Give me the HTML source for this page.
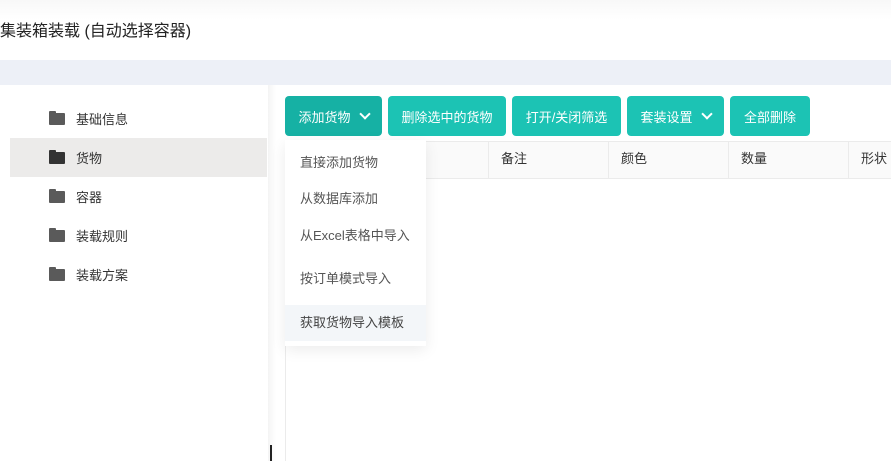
<!DOCTYPE html>
<html><head><meta charset="utf-8"><style>
*{box-sizing:border-box;margin:0;padding:0}
body{width:891px;height:461px;overflow:hidden;background:#fff;font-family:"Liberation Sans","Noto Sans CJK SC",sans-serif;position:relative;color:#333}
.abs{position:absolute}
.hdr{left:0;top:0;width:891px;height:60px;background:linear-gradient(#f8f8f8,#fff 20px)}
.title{left:0;top:17px;font-size:16px;color:#222}
.band{left:0;top:60px;width:891px;height:25px;background:#edf0f7}
.sep{left:268px;top:85px;width:8px;height:376px;background:linear-gradient(to right,#f4f4f4,#fff)}
.item{position:absolute;left:10px;width:257px;height:39px;font-size:13px;color:#333;display:flex;align-items:center;padding-left:66px}
.item .f{position:absolute;left:39px;top:14px;width:16px;height:12px;background:#5a5a5a;border-radius:1px}
.item .f:before{content:"";position:absolute;left:0;top:-2px;width:7px;height:3px;background:#5a5a5a;border-radius:1px 1px 0 0}
.sel{background:#ecebea}
.sel .f,.sel .f:before{background:#333}
.btn{position:absolute;top:96px;height:40px;background:#1cc3b4;color:#fff;font-size:13px;border-radius:4px;display:flex;align-items:center;justify-content:center}
.chev{display:inline-block;width:8px;height:8px;border-right:2px solid #fff;border-bottom:2px solid #fff;transform:rotate(45deg);margin-left:10px;margin-top:-5px}
.th{position:absolute;top:141px;height:38px;border-top:1px solid #ebebeb;border-bottom:1px solid #ebebeb;background:#fafafa}
.col{position:absolute;top:141px;height:38px;font-size:13px;padding-left:12px;line-height:36px;border-left:1px solid #ebebeb}
.dd{left:285px;top:140px;width:141px;height:206px;background:#fff;box-shadow:0 4px 14px rgba(0,0,0,.08)}
.dd div{position:absolute;left:15px;font-size:13px;color:#555}
</style></head><body>
<div class="abs hdr"></div>
<div class="abs title">集装箱装载 (自动选择容器)</div>
<div class="abs band"></div>
<div class="item" style="top:99px"><span class="f"></span>基础信息</div>
<div class="item sel" style="top:138px"><span class="f"></span>货物</div>
<div class="item" style="top:177px"><span class="f"></span>容器</div>
<div class="item" style="top:216px"><span class="f"></span>装载规则</div>
<div class="item" style="top:255px"><span class="f"></span>装载方案</div>
<div class="abs sep"></div>
<div class="abs" style="left:270px;top:445px;width:2px;height:16px;background:#222"></div>
<div class="abs" style="left:285px;top:179px;width:1px;height:282px;background:#ebebeb"></div>
<div class="btn" style="left:285px;width:97px;background:#16b1a4">添加货物<span class="chev"></span></div>
<div class="btn" style="left:388px;width:118px">删除选中的货物</div>
<div class="btn" style="left:512px;width:109px">打开/关闭筛选</div>
<div class="btn" style="left:627px;width:97px">套装设置<span class="chev"></span></div>
<div class="btn" style="left:730px;width:80px">全部删除</div>
<div class="th" style="left:285px;width:606px"></div>
<div class="col" style="left:488px;width:120px">备注</div>
<div class="col" style="left:608px;width:120px">颜色</div>
<div class="col" style="left:728px;width:120px">数量</div>
<div class="col" style="left:848px;width:43px">形状</div>
<div class="abs dd">
<div style="top:12px">直接添加货物</div>
<div style="top:48px">从数据库添加</div>
<div style="top:85px">从Excel表格中导入</div>
<div style="top:128px">按订单模式导入</div>
<div style="left:0;top:165px;width:141px;height:36px;background:#f3f6f9"></div>
<div style="top:172px;color:#444">获取货物导入模板</div>
</div>
</body></html>
